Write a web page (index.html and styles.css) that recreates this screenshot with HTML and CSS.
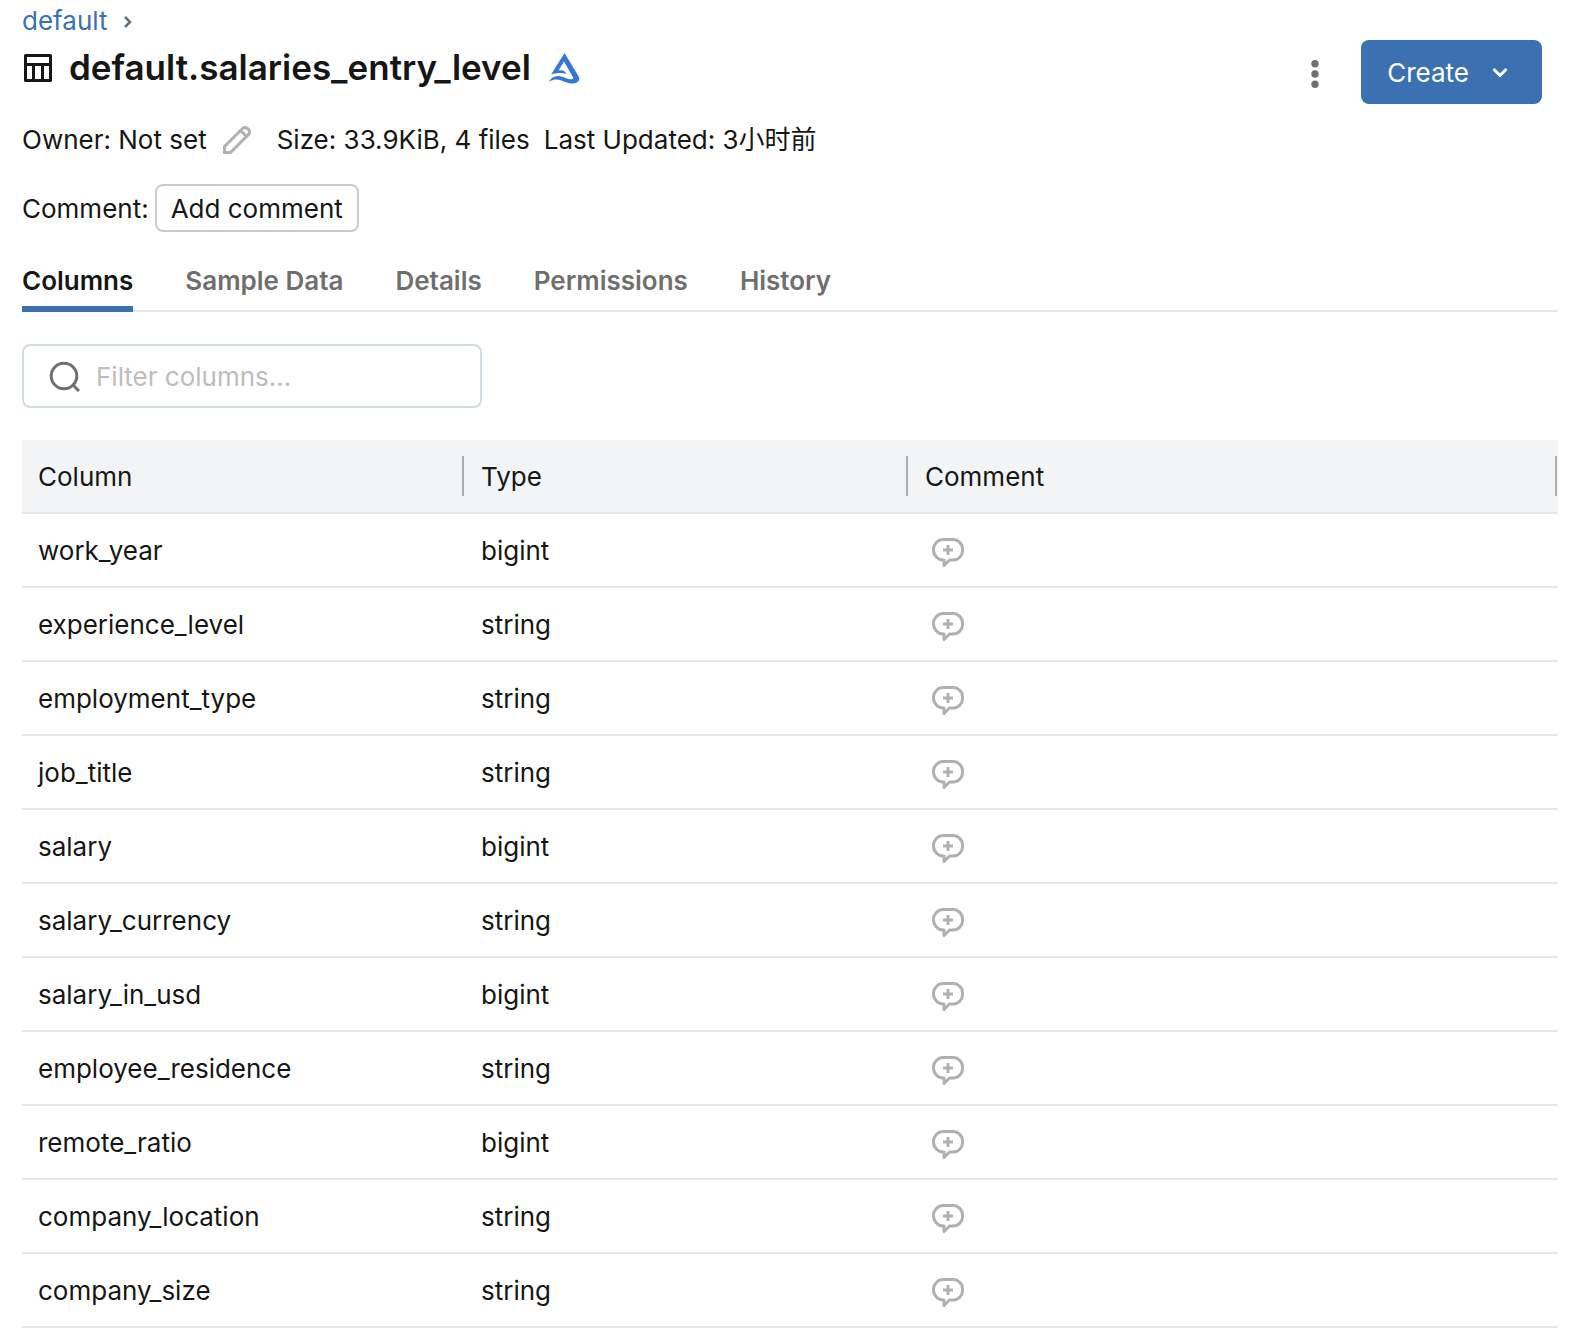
FILE: index.html
```html
<!DOCTYPE html>
<html lang="en">
<head>
<meta charset="utf-8">
<meta name="viewport" content="width=device-width, initial-scale=1">
<title>default.salaries_entry_level</title>
<link rel="stylesheet" href="styles.css">
</head>
<body>
<svg class="sprite" aria-hidden="true">
  <symbol id="bubble" viewBox="0 0 32 30">
    <path d="M11.500 1.500h9a9.500 9.500 0 0 1 10 9.500v1a9.500 9.500 0 0 1-10 10h-3l-5.500 5.500v-5.500a10 10 0 0 1-10.500-10v-1a10 10 0 0 1 10-9.500z" fill="none" stroke="currentColor" stroke-width="3" stroke-linejoin="round"/>
    <path d="M16 7v10M11 12h10" fill="none" stroke="currentColor" stroke-width="3"/>
  </symbol>
</svg>
<main class="page">
  <header class="head">
    <div class="head-main">
      <nav class="crumbs" aria-label="Breadcrumb">
        <a href="#">default</a>
        <svg width="10" height="14" viewBox="0 0 10 14" aria-hidden="true"><path d="M2 3l5 5-5 5" fill="none" stroke="#5f7281" stroke-width="2.500"/></svg>
      </nav>
      <div class="title">
        <svg width="28" height="28" viewBox="0 0 28 28" aria-hidden="true"><path d="M1.500 1.500h25v25h-25zM1.500 10.500h25M9.500 10.500v16M18.500 10.500v16" fill="none" stroke="#161616" stroke-width="3" stroke-linejoin="round"/></svg>
        <h1>default.salaries_entry_level</h1>
        <svg width="32" height="32" viewBox="0 0 32 32" aria-hidden="true"><path fill="#3576d4" d="M16.500 1L31 25c1.500 4-2 6.500-7 6.500C17 31.500 12 26 5 28c-2 .5-3 1-4.500 2C3 25.500 7 23.500 11 24c5 .6 9 4 13 3.200 1.500-.3 1.500-1 1-2L16 9.500l-5.500 9c4-.8 7 1 8 3.500-4-1.500-9-1.500-15.500.5L5 19.500z"/></svg>
      </div>
    </div>
    <div class="actions">
      <button class="more" type="button" aria-label="More actions">
        <svg width="8" height="28" viewBox="0 0 8 28"><g fill="#6f6f6f"><circle cx="4" cy="3.700" r="3.700"/><circle cx="4" cy="14" r="3.700"/><circle cx="4" cy="24.300" r="3.700"/></g></svg>
      </button>
      <button class="create" type="button">Create
        <svg width="16" height="12" viewBox="0 0 16 12" aria-hidden="true"><path d="M1.500 2L8 8.500 14.500 2" fill="none" stroke="#fff" stroke-width="3"/></svg>
      </button>
    </div>
  </header>

  <div class="meta">
    <span>Owner: Not set</span>
    <button class="edit" type="button" aria-label="Edit owner">
      <svg width="28" height="28" viewBox="0 0 28 28"><path d="M1.500 26.500v-6L19.500 2.500a3.500 3.500 0 0 1 5 0l1 1a3.500 3.500 0 0 1 0 5L7.500 26.500zM17.500 4.500l6 6" fill="none" stroke="#b0b0b0" stroke-width="3"/></svg>
    </button>
    <span class="size">Size: 33.9KiB, 4 files</span>
    <span>Last Updated: 3小时前</span>
  </div>

  <div class="comment">
    <span>Comment:</span>
    <button class="add" type="button">Add comment</button>
  </div>

  <div class="tabs" role="tablist">
    <button role="tab" type="button" aria-selected="true">Columns</button>
    <button role="tab" type="button" aria-selected="false">Sample Data</button>
    <button role="tab" type="button" aria-selected="false">Details</button>
    <button role="tab" type="button" aria-selected="false">Permissions</button>
    <button role="tab" type="button" aria-selected="false">History</button>
  </div>

  <label class="search">
    <svg width="32" height="32" viewBox="0 0 32 32" aria-hidden="true"><g fill="none" stroke="#6f6f6f" stroke-width="3"><circle cx="16" cy="16" r="12.800"/><path d="M25 25l6 6"/></g></svg>
    <input type="text" placeholder="Filter columns..." aria-label="Filter columns">
  </label>

  <table>
    <colgroup><col class="col-name"><col class="col-type"><col></colgroup>
    <thead>
      <tr><th scope="col">Column</th><th scope="col">Type</th><th scope="col">Comment</th></tr>
    </thead>
    <tbody>
      <tr><td>work_year</td><td>bigint</td><td><button class="note" type="button" aria-label="Add comment"><svg><use href="#bubble"/></svg></button></td></tr>
      <tr><td>experience_level</td><td>string</td><td><button class="note" type="button" aria-label="Add comment"><svg><use href="#bubble"/></svg></button></td></tr>
      <tr><td>employment_type</td><td>string</td><td><button class="note" type="button" aria-label="Add comment"><svg><use href="#bubble"/></svg></button></td></tr>
      <tr><td>job_title</td><td>string</td><td><button class="note" type="button" aria-label="Add comment"><svg><use href="#bubble"/></svg></button></td></tr>
      <tr><td>salary</td><td>bigint</td><td><button class="note" type="button" aria-label="Add comment"><svg><use href="#bubble"/></svg></button></td></tr>
      <tr><td>salary_currency</td><td>string</td><td><button class="note" type="button" aria-label="Add comment"><svg><use href="#bubble"/></svg></button></td></tr>
      <tr><td>salary_in_usd</td><td>bigint</td><td><button class="note" type="button" aria-label="Add comment"><svg><use href="#bubble"/></svg></button></td></tr>
      <tr><td>employee_residence</td><td>string</td><td><button class="note" type="button" aria-label="Add comment"><svg><use href="#bubble"/></svg></button></td></tr>
      <tr><td>remote_ratio</td><td>bigint</td><td><button class="note" type="button" aria-label="Add comment"><svg><use href="#bubble"/></svg></button></td></tr>
      <tr><td>company_location</td><td>string</td><td><button class="note" type="button" aria-label="Add comment"><svg><use href="#bubble"/></svg></button></td></tr>
      <tr><td>company_size</td><td>string</td><td><button class="note" type="button" aria-label="Add comment"><svg><use href="#bubble"/></svg></button></td></tr>
    </tbody>
  </table>
</main>
</body>
</html>
```
FILE: styles.css
```css
* {
  box-sizing: border-box;
}

body {
  margin: 0;
  background: #fff;
  color: #161616;
  font: 26px/32px Inter, "Noto Sans CJK SC", sans-serif;
}

svg {
  display: block;
  flex: none;
}

button {
  margin: 0;
  padding: 0;
  border: 0;
  background: none;
  color: inherit;
  font: inherit;
  cursor: pointer;
}

.sprite {
  position: absolute;
  width: 0;
  height: 0;
}

.page {
  padding: 5px 30px 12px 22px;
}

.head {
  display: flex;
  justify-content: space-between;
}

.crumbs {
  display: flex;
  align-items: center;
  gap: 16px;
}

.crumbs a {
  color: #3b71b0;
  text-decoration: none;
}

.title {
  display: flex;
  align-items: center;
  gap: 17px;
  margin-top: 11px;
  padding-left: 2px;
}

h1 {
  margin: 0;
  padding-bottom: 2px;
  font-size: 35px;
  line-height: 38px;
  font-weight: 600;
}

.actions {
  display: flex;
  align-items: center;
  gap: 42px;
  height: 64px;
  margin: 35px 16px 0 0;
}

.more {
  padding-top: 4px;
}

.create {
  display: flex;
  align-items: center;
  gap: 23px;
  height: 64px;
  padding: 2px 34px 0 26px;
  border-radius: 8px;
  background: #3b71b0;
  color: #fff;
}

.meta {
  display: flex;
  align-items: center;
  height: 32px;
  margin-top: 20px;
}

.edit {
  margin: 0 26px 0 16px;
}

.size {
  margin-right: 14px;
}

.comment {
  display: flex;
  align-items: center;
  gap: 6px;
  margin-top: 28px;
}

.comment span {
  padding-top: 2px;
}

.add {
  height: 48px;
  padding: 2px 14px 0;
  border: 2px solid #cbcbcb;
  border-radius: 8px;
}

.tabs {
  display: flex;
  gap: 52px;
  height: 64px;
  margin-top: 16px;
  box-shadow: inset 0 -2px #e8e8e8;
}

.tabs button {
  padding-top: 8px;
  border-bottom: 6px solid transparent;
  color: #6f6f6f;
  font-weight: 600;
}

.tabs [aria-selected="true"] {
  border-color: #3b71b0;
  color: #161616;
}

.search {
  display: flex;
  align-items: center;
  gap: 16px;
  width: 460px;
  max-width: 100%;
  height: 64px;
  margin: 32px 0;
  padding: 0 24px;
  border: 2px solid #d0dbe6;
  border-radius: 8px;
}

.search input {
  flex: 1;
  min-width: 0;
  padding: 2px 0 0;
  border: 0;
  outline: 0;
  background: none;
  color: inherit;
  font: inherit;
}

.search input::placeholder {
  color: #bdbdbd;
  opacity: 1;
}

table {
  width: 100%;
  table-layout: fixed;
  border-collapse: separate;
  border-spacing: 0;
}

.col-name {
  width: 443px;
}

.col-type {
  width: 444px;
}

th,
td {
  height: 74px;
  padding: 2px 16px 0;
  border-bottom: 2px solid #e8e8e8;
  font-weight: 400;
  text-align: left;
  vertical-align: middle;
}

th {
  position: relative;
  background: #f3f4f6;
}

th::after {
  content: "";
  position: absolute;
  top: 16px;
  right: 1px;
  width: 2px;
  height: 40px;
  background: #adadad;
}

.note {
  display: block;
  padding: 4px 7px 0;
  color: #b0b0b0;
}

.note svg {
  width: 32px;
  height: 30px;
}
```
